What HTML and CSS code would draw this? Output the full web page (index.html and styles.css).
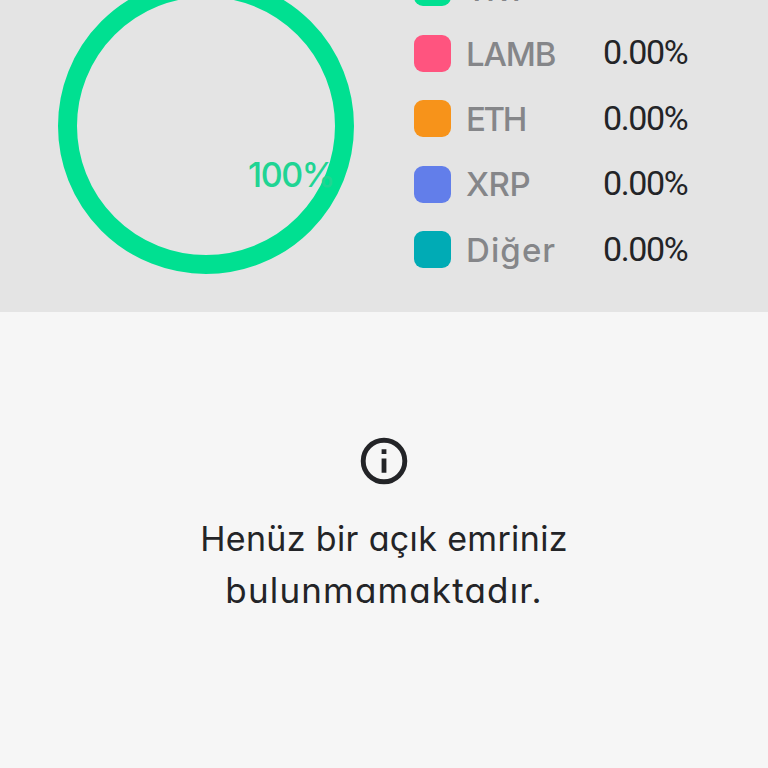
FILE: index.html
```html
<!DOCTYPE html>
<html lang="tr">
<head>
  <meta charset="UTF-8">
  <meta name="viewport" content="width=device-width, initial-scale=1.0">
  <title>Portföy</title>
  <link rel="stylesheet" href="styles.css">
</head>
<body>
  <section class="portfolio">
    <div class="chart">
      <span class="chart-label">100%</span>
    </div>
    <ul class="legend">
      <li><span class="swatch try"></span><span class="name name-try">TRY</span></li>
      <li><span class="swatch lamb"></span><span class="name name-lamb">LAMB</span><span class="value">0.00%</span></li>
      <li><span class="swatch eth"></span><span class="name name-eth">ETH</span><span class="value">0.00%</span></li>
      <li><span class="swatch xrp"></span><span class="name name-xrp">XRP</span><span class="value">0.00%</span></li>
      <li><span class="swatch other"></span><span class="name name-other">Diğer</span><span class="value">0.00%</span></li>
    </ul>
  </section>

  <section class="empty">
    <svg class="info-icon" viewBox="0 0 48 48">
      <circle cx="24" cy="24" r="20.8" fill="none" stroke="#232427" stroke-width="4.9"/>
      <path d="M21.6 12.2h4.8v4.7h-4.8zM21.6 21.6h4.8v14.2h-4.8z" fill="#232427"/>
    </svg>
    <p class="line-one">Henüz bir açık emriniz</p>
    <p class="line-two">bulunmamaktadır.</p>
  </section>
</body>
</html>
```

FILE: styles.css
```css
body {
    margin: 0;
    height: 768px;
    overflow: hidden;
    background-color: #f6f6f6;
    color: #232427;
    font-family: Inter, "Liberation Sans", sans-serif;
    font-feature-settings: "cv11";
}
.portfolio {
    display: flex;
    align-items: flex-end;
    box-sizing: border-box;
    height: 312px;
    padding: 0 0 38px 58px;
    background-color: #e4e4e4;
}
.chart {
    position: relative;
    flex: none;
    box-sizing: border-box;
    width: 296px;
    height: 296px;
    border: 19px solid #00e091;
    border-radius: 50%;
}
.chart-label {
    position: absolute;
    left: 171px;
    top: 158px;
    font-size: 34px;
    line-height: 40px;
    font-weight: 500;
    letter-spacing: -1.4px;
    color: #20d493;
}
.legend {
    list-style: none;
    margin: 0 0 6px 60px;
    padding: 0;
    display: flex;
    flex-direction: column;
    gap: 28.4px;
}
.legend li {
    display: flex;
    align-items: center;
    height: 37px;
}
.swatch {
    width: 37px;
    height: 37px;
    border-radius: 9px;
}
.try {
    background-color: #00e091;
}
.lamb {
    background-color: #ff547f;
}
.eth {
    background-color: #f7931a;
}
.xrp {
    background-color: #627eea;
}
.other {
    background-color: #00abb5;
}
.name {
    width: 137px;
    margin-left: 15px;
    padding-top: 1.4px;
    font-size: 33px;
    line-height: 37px;
    font-weight: 500;
    color: #858689;
}
.name-try {
    padding-top: 4px;
    letter-spacing: -1.6px;
}
.name-lamb {
    letter-spacing: -1.1px;
}
.name-eth {
    letter-spacing: -2.3px;
}
.name-xrp {
    letter-spacing: -0.5px;
}
.name-other {
    letter-spacing: 1.1px;
}
.value {
    padding-bottom: 2px;
    font-family: Roboto, sans-serif;
    font-size: 34px;
    line-height: 34px;
    letter-spacing: -1.4px;
}
.empty {
    display: flex;
    flex-direction: column;
    align-items: center;
    padding-top: 125px;
}
.info-icon {
    width: 48px;
    height: 48px;
    margin-bottom: 29px;
}
.empty p {
    margin: 0;
    font-size: 34px;
    line-height: 50.5px;
    white-space: nowrap;
}
.empty .line-one {
    letter-spacing: 0.35px;
}
.empty .line-two {
    font-size: 35px;
    letter-spacing: 1.15px;
}
```
